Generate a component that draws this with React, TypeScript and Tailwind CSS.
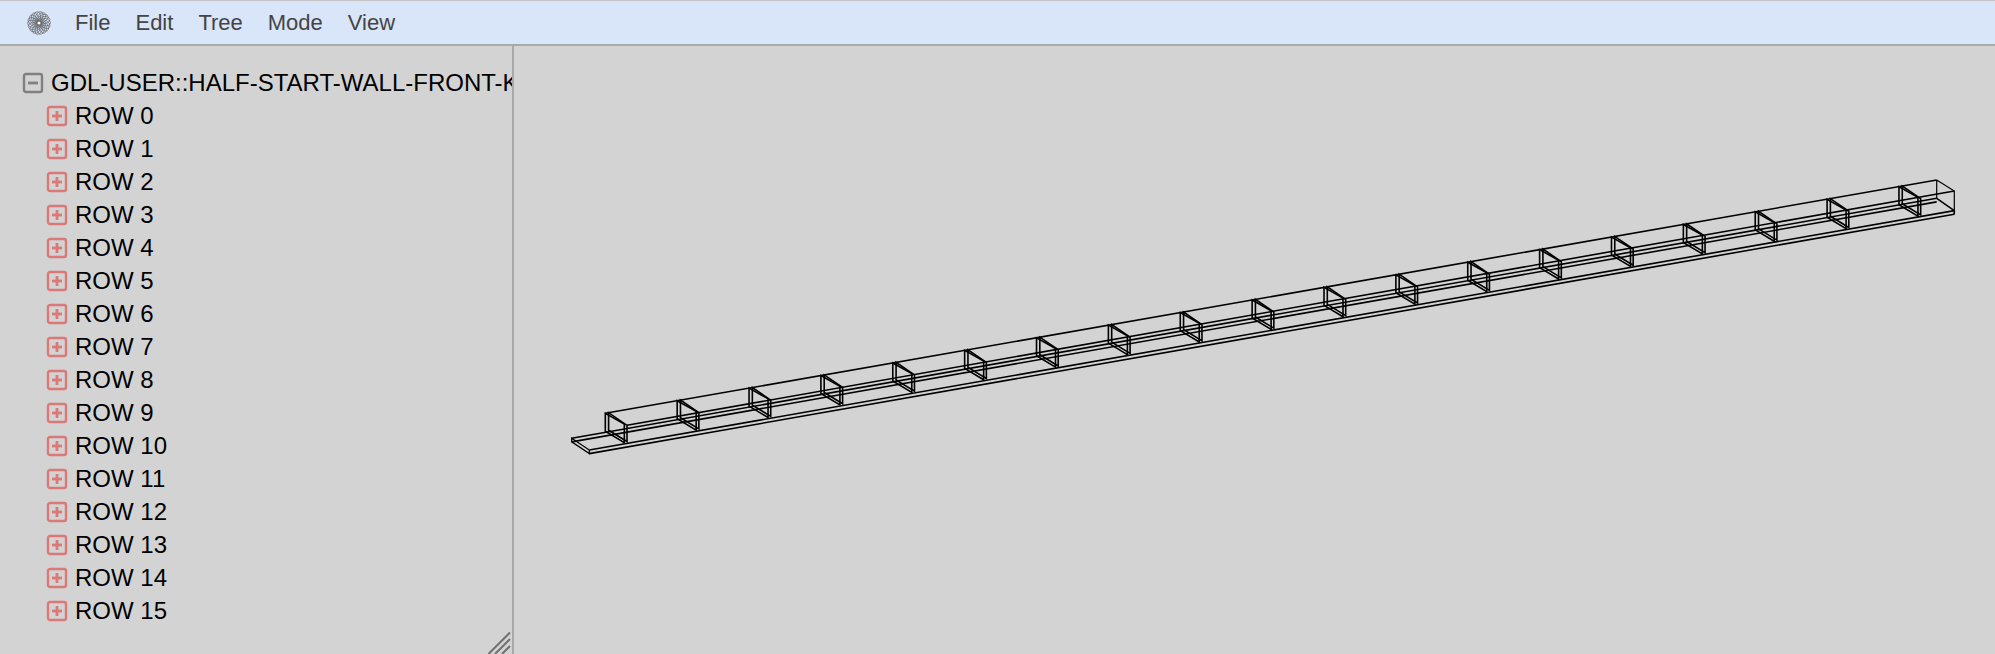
const menu = ["File", "Edit", "Tree", "Mode", "View"];
const rows = Array.from({ length: 16 }, (_, i) => `ROW ${i}`);

// wall frames sit at a fixed step along the long axis
const frames = Array.from({ length: 19 }, (_, i) => ({ x: 605.3 + i * 71.87, y: 413.3 - i * 12.59 }));
const petals = Array.from({ length: 18 }, (_, i) => i * 20);

function Logo() {
  return (
    <svg width="26" height="26" viewBox="0 0 26 26" className="shrink-0">
      {petals.map((a) => (
        <ellipse key={a} cx="13" cy="7.2" rx="3.6" ry="5.8" fill="none" stroke="#555" strokeWidth="0.6" transform={`rotate(${a} 13 13) rotate(24 13 7.2)`} />
      ))}
      <circle cx="13" cy="13" r="1.6" fill="#fff" />
    </svg>
  );
}

function TreeBox({ open }: { open?: boolean }) {
  const color = open ? "#808080" : "#db7878";
  return (
    <svg width="22" height="22" viewBox="0 0 22 22" className="shrink-0">
      <rect x="2" y="2" width="18" height="18" rx="2" fill="none" stroke={color} strokeWidth="2.4" />
      <path d="M6 11h10" stroke={color} strokeWidth="2.8" />
      {!open && <path d="M11 6v10" stroke={color} strokeWidth="2.8" />}
    </svg>
  );
}

function Frame({ x, y }: { x: number; y: number }) {
  return (
    <>
      <path d={`M${x} ${y}V${y + 18}L${x + 19} ${y + 29.4}V${y + 10.7}Z`} />
      <path d={`M${x + 3.3} ${y - 0.6}V${y + 17}L${x + 21.7} ${y + 28.2}V${y + 12}Z`} />
    </>
  );
}

function Wall() {
  return (
    <svg width="1481" height="608" viewBox="514 46 1481 608" className="block" fill="none" stroke="#000" strokeWidth="1.6">
      {/* floor plate */}
      <path d="M571.7 438.3L1936.7 198.3M571.7 441.9L1936.7 201.9M589.3 450L1954.3 210.6M589.3 453.6L1954.3 214.2" />
      <path d="M571.7 438.3L589.3 450V453.6L571.7 441.9Z" strokeWidth="1.3" />
      <path d="M1936.7 198.3L1954.3 210.6V214.2" />
      {/* rails */}
      <path d="M605.3 413.3L1936.7 180M627 425.3L1954.3 191" />
      {frames.map((f) => (
        <Frame key={f.x} x={f.x} y={f.y} />
      ))}
      {/* end frame is single */}
      <path d="M1936.7 180V198.3M1936.7 180L1954.3 191V214.2" strokeWidth="1.2" />
    </svg>
  );
}

export default function App() {
  return (
    <div className="flex h-[654px] w-[1995px] flex-col overflow-hidden bg-[#d3d3d3] font-['Liberation_Sans',Arial,sans-serif]">
      <header className="flex h-[46px] shrink-0 items-center gap-[25px] border-t border-b-2 border-t-[#c4c4c4] border-b-[#a9a9a9] bg-[#d9e5f9] pl-[26px] text-[22px] text-[#444]">
        <span className="mr-[-2px]"><Logo /></span>
        {menu.map((m) => (
          <span key={m}>{m}</span>
        ))}
      </header>
      <div className="flex min-h-0 flex-1">
        <aside className="relative w-[514px] shrink-0 overflow-hidden border-r-2 border-[#a9a9a9] pt-[20px] text-[24px] leading-[33px] text-black">
          <div className="flex h-[33px] items-center gap-[7px] whitespace-nowrap pl-[22px]">
            <TreeBox open />
            <span>GDL-USER::HALF-START-WALL-FRONT-KEY</span>
          </div>
          {rows.map((r) => (
            <div key={r} className="flex h-[33px] items-center gap-[7px] pl-[46px]">
              <TreeBox />
              <span>{r}</span>
            </div>
          ))}
          <svg width="24" height="24" viewBox="0 0 24 24" className="absolute right-0 bottom-0" stroke="#707070" strokeWidth="2">
            <path d="M0.5 24L22 2.5M7 24L22 9M14 24L22 16" />
          </svg>
        </aside>
        <main className="min-w-0 flex-1">
          <Wall />
        </main>
      </div>
    </div>
  );
}
